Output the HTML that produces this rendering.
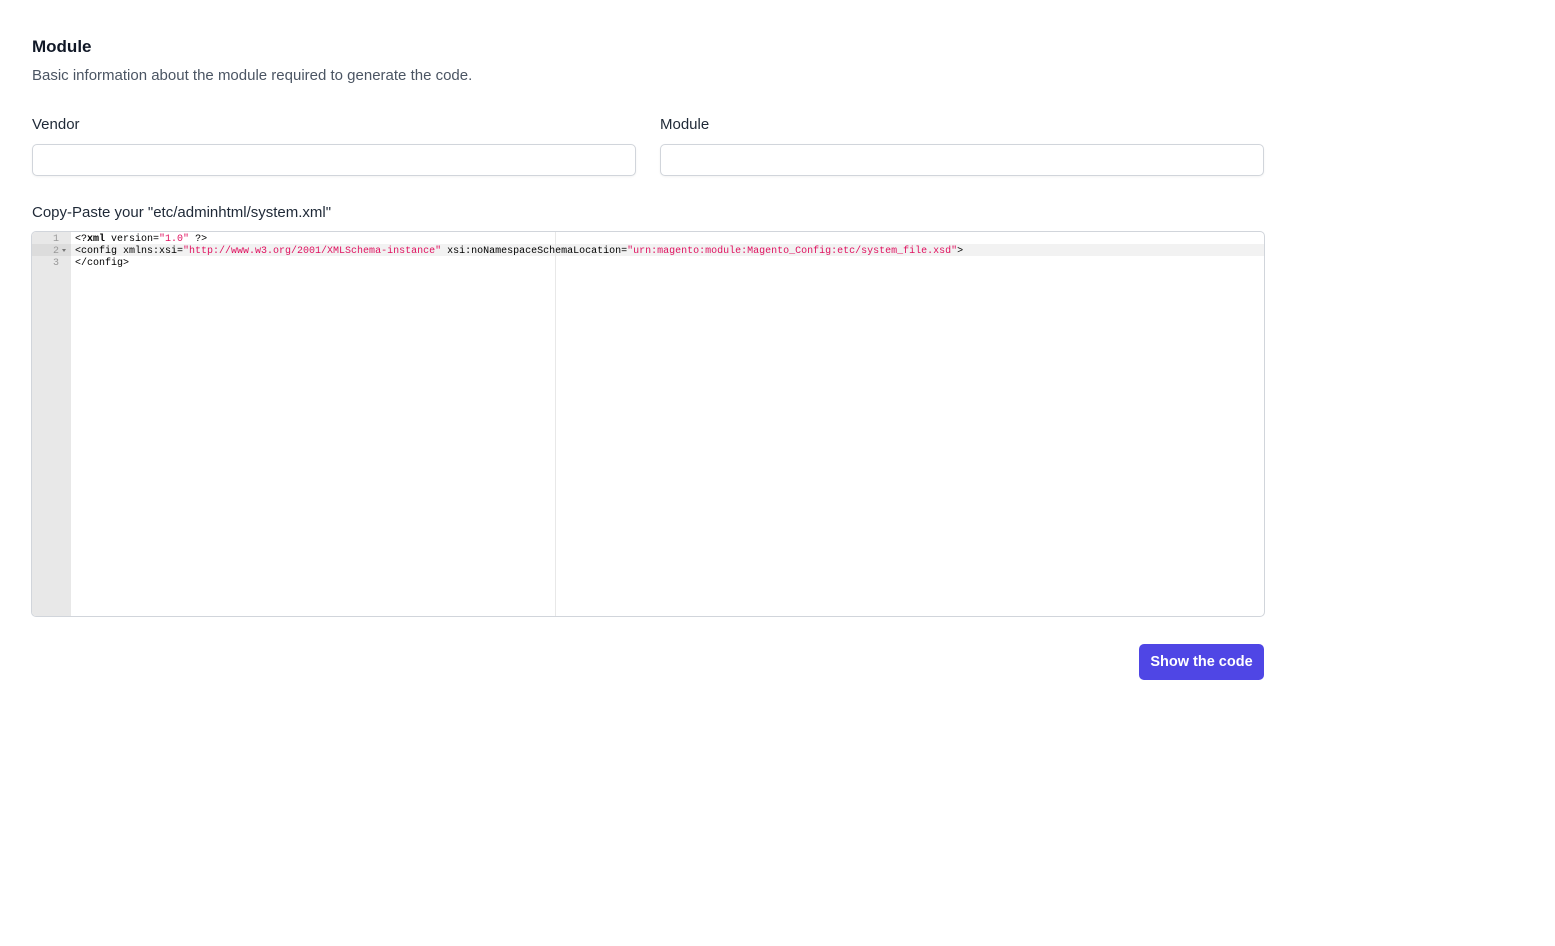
<!DOCTYPE html>
<html><head><meta charset="utf-8"><style>
*{box-sizing:border-box;margin:0;padding:0}
body{width:1555px;height:946px;background:#fff;font-family:"Liberation Sans",sans-serif;color:#111827;position:relative;overflow:hidden}
.abs{position:absolute}
h2{position:absolute;left:32px;top:37px;font-size:17px;font-weight:bold;color:#111827}
.desc{left:32px;top:67px;font-size:15px;color:#4b5563}
.lbl{font-size:15px;color:#1f2937}
.inp{border:1px solid #d1d5db;border-radius:5px;height:32px;background:#fff;box-shadow:0 1px 2px rgba(0,0,0,.05)}
.ed{left:31px;top:231px;width:1234px;height:386px;border:1px solid #d1d5db;border-radius:5px;overflow:hidden;background:#fff}
.gut{position:absolute;left:0;top:0;width:39px;height:100%;background:#e8e8e8}
.pm{position:absolute;left:523px;top:0;width:1px;height:100%;background:#e8e8e8}
.hl{position:absolute;left:39px;top:12px;right:0;height:12px;background:#f2f2f2}
.ghl{position:absolute;left:0;top:12px;width:39px;height:12px;background:#dcdcdc}
.code{position:absolute;left:43px;top:1.5px;font-family:"Liberation Mono","DejaVu Sans Mono",monospace;font-size:10px;line-height:12px;white-space:pre;color:#000}
.ln{position:absolute;left:0;top:1.5px;width:27px;text-align:right;font-family:"Liberation Mono",monospace;font-size:10px;line-height:12px;color:#999;white-space:pre}
.s{color:#e0115f}
.btn{left:1139px;top:644px;width:125px;height:36px;background:#4f46e5;border-radius:5px;color:#fff;font-weight:bold;font-size:14.5px;text-align:center;line-height:36px}
</style></head><body>
<h2>Module</h2>
<div class="abs desc">Basic information about the module required to generate the code.</div>
<div class="abs lbl" style="left:32px;top:116px">Vendor</div>
<div class="abs lbl" style="left:660px;top:116px">Module</div>
<div class="abs inp" style="left:32px;top:144px;width:604px"></div>
<div class="abs inp" style="left:660px;top:144px;width:604px"></div>
<div class="abs lbl" style="left:32px;top:204px">Copy-Paste your "etc/adminhtml/system.xml"</div>
<div class="abs ed">
<div class="gut"></div><div class="ghl"></div><div class="hl"></div><div class="pm"></div>
<div class="ln">1
2
3</div>
<div class="abs" style="left:30px;top:17px;width:0;height:0;border-left:2.5px solid transparent;border-right:2.5px solid transparent;border-top:3px solid #777"></div>
<div class="code">&lt;?<b>xml</b> version=<span class="s">"1.0"</span> ?&gt;
&lt;config xmlns:xsi=<span class="s">"http://www.w3.org/2001/XMLSchema-instance"</span> xsi:noNamespaceSchemaLocation=<span class="s">"urn:magento:module:Magento_Config:etc/system_file.xsd"</span>&gt;
&lt;/config&gt;</div>
</div>
<div class="abs btn">Show the code</div>
</body></html>
